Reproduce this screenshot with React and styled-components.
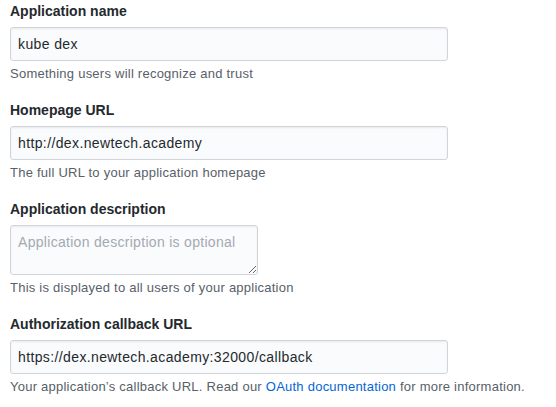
import styled, { createGlobalStyle } from 'styled-components'

const GlobalStyle = createGlobalStyle`
    body {
        margin : 0;
        background : #fff;
        font-family : "Liberation Sans", Arial, sans-serif;
        color : #24292e;
    }
`

const Form = styled.form`
    display : flex;
    flex-direction : column;
    gap : 17px;
    padding : 1px 10px 0 10px;
`

const Group = styled.div`
    display : flex;
    flex-direction : column;
    align-items : flex-start;
`

const Label = styled.label`
    font-size : 14px;
    font-weight : 700;
    line-height : 20px;
    margin-bottom : 6px;
`

const TextInput = styled.input`
    box-sizing : border-box;
    width : 438px;
    height : 34px;
    padding : 6px 7px;
    font-family : inherit;
    font-size : 14px;
    letter-spacing : 0.38px;
    color : #24292e;
    background : #fafbfc;
    border : 1px solid #d1d5da;
    border-radius : 3px;
    box-shadow : inset 0 1px 2px rgba(27, 31, 35, 0.075);
    outline : none;
`

const TextArea = styled.textarea`
    box-sizing : border-box;
    width : 248px;
    height : 50px;
    padding : 6px 7px;
    font-family : inherit;
    font-size : 14px;
    letter-spacing : 0.3px;
    line-height : 20px;
    color : #24292e;
    background : #fafbfc;
    border : 1px solid #d1d5da;
    border-radius : 3px;
    box-shadow : inset 0 1px 2px rgba(27, 31, 35, 0.075);
    outline : none;
    resize : both;

    &::placeholder {
        color : #a3aab1;
    }
`

const Note = styled.p`
    margin : 4px 0 0 0;
    font-size : 13px;
    letter-spacing : 0.24px;
    line-height : 18px;
    color : #586069;
`

const Link = styled.a`
    color : #0366d6;
    text-decoration : none;
`

export default function App(){

    return(
        <>
            <GlobalStyle/>
            <Form onSubmit={e => e.preventDefault()}>
                <Group>
                    <Label>Application name</Label>
                    <TextInput defaultValue="kube dex"/>
                    <Note>Something users will recognize and trust</Note>
                </Group>
                <Group>
                    <Label>Homepage URL</Label>
                    <TextInput defaultValue="http://dex.newtech.academy"/>
                    <Note>The full URL to your application homepage</Note>
                </Group>
                <Group>
                    <Label>Application description</Label>
                    <TextArea placeholder="Application description is optional"/>
                    <Note>This is displayed to all users of your application</Note>
                </Group>
                <Group>
                    <Label>Authorization callback URL</Label>
                    <TextInput defaultValue="https://dex.newtech.academy:32000/callback"/>
                    <Note>
                        Your application’s callback URL. Read our <Link href="#">OAuth documentation</Link> for more information.
                    </Note>
                </Group>
            </Form>
        </>
    )
}
